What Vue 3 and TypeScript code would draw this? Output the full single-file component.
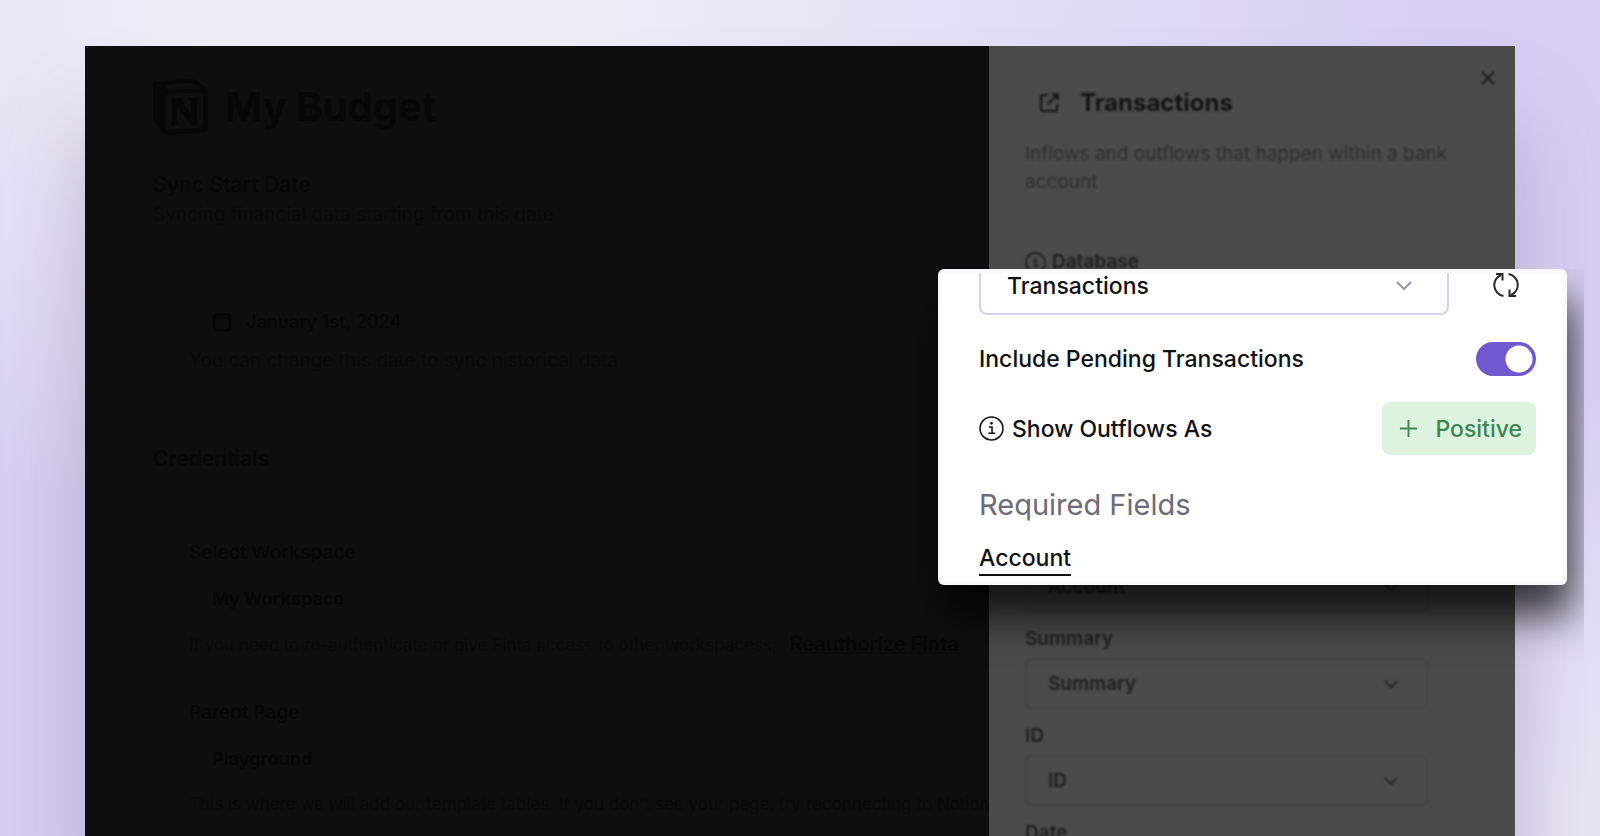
<script setup lang="ts">
import { ref } from 'vue'

interface Field {
  id: string
  label: string
}

const fields: Field[] = [
  { id: 'field-account', label: 'Account' },
  { id: 'field-summary', label: 'Summary' },
  { id: 'field-id', label: 'ID' },
  { id: 'field-date', label: 'Date' },
]

const includePending = ref(true)
</script>

<template>
  <div class="stage">
    <div class="window">
      <main class="budget">
        <header class="budget-head">
          <svg class="logo" viewBox="0 0 55 57" aria-hidden="true">
            <path fill-rule="evenodd" d="M4 3.500 37 1q4-.300 7 2l8.500 6q2.500 2 2.500 5v36q0 4-4.500 4.500L15 57q-3.500 0-5.500-2.500l-7.500-10Q0 42 0 39V8q0-4 4-4.500ZM10 7l5 4q2 1.500 5 1.200L47 10.500l-7-5q-1.500-1-4-.800ZM16 16q-3 .200-3 3v30q0 3 3 2.800l31-1.800q3-.200 3-3V17q0-3-3-2.800ZM18 20.500l9-.600L38 36V23l-3-.800V20l10-.600v2l-1 1V46q-4 2-7 0L24 29v15l3 1v2l-9 .600v-2l1-1V23.500L18 22Z" />
          </svg>
          <h1>My Budget</h1>
        </header>

        <section class="sync">
          <h2>Sync Start Date</h2>
          <p class="lead">Syncing financial data starting from this date</p>
          <div class="group">
            <button type="button" class="date">
              <svg viewBox="0 0 20 20" aria-hidden="true"><rect x="2" y="2.500" width="16" height="16" rx="3" /><path d="M2 6h16M6 1v3M14 1v3" /></svg>
              January 1st, 2024
            </button>
            <p class="lead">You can change this date to sync historical data</p>
          </div>
        </section>

        <section class="credentials">
          <h2>Credentials</h2>
          <div class="group">
            <h3>Select Workspace</h3>
            <button type="button" class="choice">My Workspace</button>
            <p class="note">
              If you need to re-authenticate or give Finta access to other workspacess, <a href="#">Reauthorize Finta</a>
            </p>
            <h3>Parent Page</h3>
            <button type="button" class="choice">Playground</button>
            <p class="note">This is where we will add our template tables. If you don't see your page, try reconnecting to Notion</p>
          </div>
        </section>
      </main>

      <aside class="drawer">
        <button type="button" class="close" aria-label="Close">
          <svg viewBox="0 0 14 14" aria-hidden="true"><path d="M1 1l12 12M13 1 1 13" /></svg>
        </button>
        <header class="drawer-head">
          <svg viewBox="0 0 20 20" aria-hidden="true"><path d="M9 2H4a2 2 0 0 0-2 2v12a2 2 0 0 0 2 2h12a2 2 0 0 0 2-2v-5M13 1.500h5.500V7M18 2 8.500 11.500" /></svg>
          <h2>Transactions</h2>
        </header>
        <p class="about">Inflows and outflows that happen within a bank account</p>
        <p class="database">
          <svg viewBox="0 0 24 24" aria-hidden="true"><circle cx="12" cy="12" r="11" /><path d="M9.500 10.500h3v6M9 16.500h6.500" /><circle class="dot" cx="12" cy="7" r="1.300" /></svg>
          Database
        </p>
        <div class="fields">
          <div v-for="field in fields" :key="field.id" class="field">
            <label :for="field.id">{{ field.label }}</label>
            <div class="select">
              <select :id="field.id"><option>{{ field.label }}</option></select>
              <svg viewBox="0 0 16 10" aria-hidden="true"><path d="m1 1 7 7 7-7" /></svg>
            </div>
          </div>
        </div>
      </aside>
    </div>

    <section class="spotlight" aria-label="Transactions settings">
      <div class="spotlight-body">
        <div class="row picker">
          <div class="select large">
            <select aria-label="Database"><option>Transactions</option></select>
            <svg viewBox="0 0 16 10" aria-hidden="true"><path d="m1 1 7 7 7-7" /></svg>
          </div>
          <button type="button" class="refresh" aria-label="Refresh">
            <svg viewBox="0 0 26 26" aria-hidden="true"><path d="M10.500 24A11 11 0 0 1 8 3M3 2h6.500v6.500M15.500 2A11 11 0 0 1 18 23M23 24h-6.500v-6.500" /></svg>
          </button>
        </div>
        <div class="row">
          <label for="pending">Include Pending Transactions</label>
          <input id="pending" v-model="includePending" class="toggle" type="checkbox" role="switch" />
        </div>
        <div class="row outflows">
          <span class="with-icon">
            <svg viewBox="0 0 24 24" aria-hidden="true"><circle cx="12" cy="12" r="11" /><path d="M9.500 10.500h3v6M9 16.500h6.500" /><circle class="dot" cx="12" cy="7" r="1.300" /></svg>
            Show Outflows As
          </span>
          <button type="button" class="positive">
            <svg viewBox="0 0 20 20" aria-hidden="true"><path d="M10 1v18M1 10h18" /></svg>
            Positive
          </button>
        </div>
        <h3>Required Fields</h3>
        <a href="#" class="account">Account</a>
      </div>
    </section>
  </div>
</template>

<style>
body {
  margin: 0;
}
</style>

<style scoped>
.stage {
  position: relative;
  box-sizing: border-box;
  height: 100vh;
  padding: 46px 85px 0;
  overflow: hidden;
  font-family: Inter, "Liberation Sans", sans-serif;
  background:
    radial-gradient(ellipse 20% 55% at 103% 100%, #e8e5f5 20%, transparent),
    radial-gradient(ellipse 66% 62% at 24% 0, #efeef7 15%, rgba(239, 238, 247, 0)),
    #d6cff3;
}

h1, h2, h3, p {
  margin: 0;
}

button, select {
  padding: 0;
  border: 0;
  background: none;
  color: inherit;
  font: inherit;
}

svg {
  flex: none;
  fill: none;
  stroke: currentColor;
  stroke-width: 2;
}

.dot {
  fill: currentColor;
  stroke: none;
}

.window {
  display: grid;
  grid-template-columns: minmax(0, 1fr) 526px;
  height: 100%;
  background: #0e0e0e;
  box-shadow: 0 80px 80px rgba(120, 110, 130, 0.35);
}

.budget {
  padding: 32px 0 0 68px;
  overflow: hidden;
  color: #070707;
  font-size: 18px;
  line-height: 28px;
  white-space: nowrap;
}

.budget-head {
  display: flex;
  align-items: center;
  gap: 17px;
}

.logo {
  width: 55px;
  height: 57px;
  fill: currentColor;
  stroke: none;
}

.budget h1 {
  font-size: 40px;
  line-height: 56px;
}

.budget h2 {
  font-size: 21px;
  font-weight: 600;
  line-height: 32px;
}

.budget h3 {
  font-size: 19px;
  font-weight: 600;
}

.sync {
  margin-top: 34px;
}

.group {
  padding-left: 36px;
}

.lead {
  color: #090909;
  font-size: 19px;
}

.date {
  display: flex;
  align-items: center;
  gap: 14px;
  margin: 79px 0 11px 23px;
  font-weight: 600;
}

.date svg {
  width: 20px;
  height: 20px;
  stroke-width: 3;
}

.credentials {
  margin-top: 68px;
}

.credentials h3 {
  margin-top: 64px;
}

.choice {
  display: block;
  margin: 18px 0 17px 23px;
  font-weight: 700;
}

.note {
  color: #090909;
  font-size: 17px;
}

.note a {
  margin-left: 8px;
  color: #070707;
  font-size: 20px;
  font-weight: 600;
  text-decoration-color: #0b0b0b;
}

.note + h3 {
  margin-top: 40px;
}

.drawer {
  position: relative;
  box-sizing: border-box;
  padding: 39px 36px 0;
  overflow: hidden;
  background: #4b4b4b;
  color: #1e1e1e;
  font-size: 18px;
  line-height: 28px;
}

.drawer > * {
  filter: blur(1px);
}

.close {
  position: absolute;
  top: 25px;
  right: 20px;
  display: flex;
}

.close svg {
  width: 14px;
  height: 14px;
}

.drawer-head {
  display: flex;
  align-items: center;
  gap: 21px;
  padding-left: 14px;
  color: #121212;
}

.drawer-head svg {
  width: 20px;
  height: 20px;
}

.drawer-head h2 {
  font-size: 24px;
  font-weight: 700;
  line-height: 36px;
}

.about {
  margin-top: 19px;
  color: #2e2e2e;
  font-size: 19px;
}

.database {
  display: flex;
  align-items: center;
  gap: 6px;
  margin-top: 52px;
  font-size: 19px;
  font-weight: 600;
}

.database svg {
  width: 21px;
  height: 21px;
}

.fields {
  display: grid;
  gap: 13px;
  margin-top: 252px;
}

.field {
  display: grid;
  gap: 5px;
  font-size: 19px;
  font-weight: 600;
}

.select {
  position: relative;
  width: 403px;
}

.select select {
  box-sizing: border-box;
  display: block;
  width: 100%;
  height: 51px;
  padding: 0 21px;
  appearance: none;
  border: 2px solid #434343;
  border-radius: 6px;
}

.select svg {
  position: absolute;
  top: 50%;
  right: 30px;
  width: 14px;
  height: 9px;
  margin-top: -4px;
}

.spotlight {
  position: absolute;
  top: 269px;
  right: 33px;
  box-sizing: border-box;
  width: 629px;
  padding: 4px;
  border-radius: 6px;
  background: #f9f8fc;
  box-shadow: 6px 31px 42px rgba(0, 0, 0, 0.75);
  clip-path: inset(0 -17px -90px -60px);
}

.spotlight-body {
  padding: 0 27px 5px 37px;
  overflow: hidden;
  background: #fefefe;
  color: #111114;
  font-size: 23px;
  font-weight: 500;
  line-height: 32px;
}

.row {
  display: flex;
  align-items: center;
  justify-content: space-between;
}

.picker {
  align-items: flex-start;
  margin-bottom: 27px;
}

.select.large {
  width: 470px;
}

.large select {
  height: 58px;
  margin-top: -16px;
  padding: 0 26px;
  border-color: #d6d2e9;
  border-radius: 8px;
}

.large svg {
  top: 8px;
  right: 37px;
  width: 16px;
  height: 10px;
  margin: 0;
  color: #9a97ac;
}

.refresh {
  display: flex;
  margin: -1px 17px 0 0;
  color: #2a2930;
}

.refresh svg {
  width: 26px;
  height: 26px;
}

.toggle {
  width: 60px;
  height: 34px;
  margin: 0;
  appearance: none;
  border-radius: 17px;
  background: radial-gradient(circle at 43px 17px, #fff 13px, transparent 14px) #7158cf;
}

.outflows {
  margin-top: 26px;
}

.with-icon {
  display: flex;
  align-items: center;
  gap: 8px;
}

.with-icon svg {
  width: 25px;
  height: 25px;
  stroke-width: 1.500;
}

.positive {
  display: flex;
  align-items: center;
  gap: 17px;
  height: 53px;
  padding: 0 14px 0 17px;
  border-radius: 8px;
  background: #ddf3df;
  color: #3c8650;
}

.positive svg {
  width: 19px;
  height: 19px;
}

.spotlight h3 {
  margin: 30px 0 18px;
  color: #6d6b78;
  font-size: 29px;
  font-weight: 400;
  line-height: 40px;
}

.account {
  display: block;
  width: fit-content;
  border-bottom: 2px solid #111114;
  color: inherit;
  line-height: 31px;
  text-decoration: none;
}
</style>
